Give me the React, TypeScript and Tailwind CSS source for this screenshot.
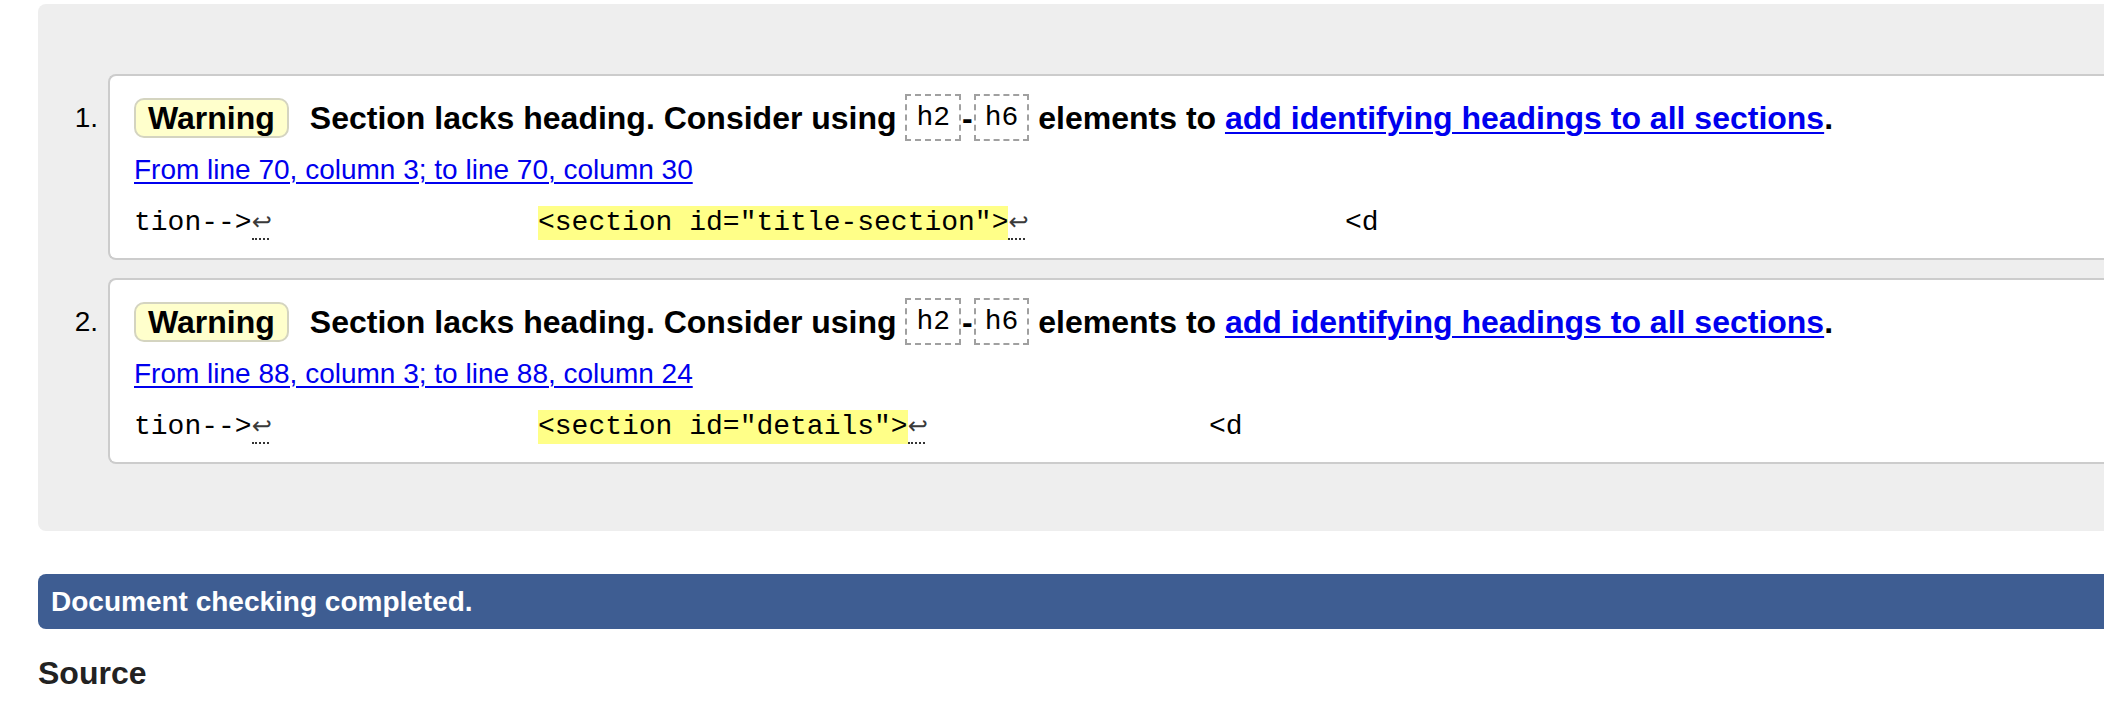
import React from "react";

type Item = {
  n: string;
  from: string;
  hl: string;
  tail: string;
};

const items: Item[] = [
  {
    n: "1.",
    from: "From line 70, column 3; to line 70, column 30",
    hl: '<section id="title-section">',
    tail: "w-[807px]",
  },
  {
    n: "2.",
    from: "From line 88, column 3; to line 88, column 24",
    hl: '<section id="details">',
    tail: "w-[671px]",
  },
];

function CodeBox({ children }: { children: React.ReactNode }) {
  return (
    <span className="inline-flex h-[47px] items-center border-2 border-dashed border-[#a0a0a0] px-[9px] font-['Liberation_Mono',monospace] text-[28px] font-normal">
      {children}
    </span>
  );
}

function Lf() {
  return (
    <span
      title="Line break"
      className="inline-block w-[17px] overflow-visible text-center leading-[32px] border-b-2 border-dotted border-[#333333] font-['DejaVu_Sans',sans-serif] text-[24px] text-[#3a3a3a]"
    >
      ↩
    </span>
  );
}

function Row({ item, first }: { item: Item; first: boolean }) {
  return (
    <li className={first ? "flex" : "mt-[18px] flex"}>
      <div className="mt-[18px] h-[51px] w-[70px] shrink-0 pr-[10px] text-right text-[28px] leading-[51px] text-black">
        {item.n}
      </div>
      <div className="min-w-0 flex-1 rounded-l-[8px] border-2 border-r-0 border-[#cccccc] bg-white pb-[18px] pl-[24px] pt-[16px]">
        <div className="flex h-[51px] items-center whitespace-nowrap text-[32px] font-bold text-black">
          <span className="mr-[21px] inline-flex h-[40px] items-center rounded-[10px] border-2 border-[#d4d4c0] bg-[#ffffcc] px-[12px]">
            Warning
          </span>
          <span className="whitespace-pre">Section lacks heading. Consider using </span>
          <CodeBox>h2</CodeBox>
          <span className="mx-[1px]">-</span>
          <CodeBox>h6</CodeBox>
          <span className="whitespace-pre"> elements to </span>
          <a href="#" className="text-[#0000ee] underline decoration-2 underline-offset-[3px]">
            add identifying headings to all sections
          </a>
          <span>.</span>
        </div>
        <div className="mt-[9px] h-[36px] text-[28px] leading-[36px]">
          <a href="#" className="text-[#0000ee] underline decoration-2 underline-offset-[3px]">
            {item.from}
          </a>
        </div>
        <div className="mt-[18px] flex h-[34px] items-center whitespace-pre font-['Liberation_Mono',monospace] text-[28px] text-black">
          <span className="flex w-[404px] shrink-0 items-center">
            <span>tion--&gt;</span>
            <Lf />
          </span>
          <span className={item.tail + " flex shrink-0 items-center"}>
            <span className="h-[34px] bg-[#ffff88] leading-[34px]">{item.hl}</span>
            <Lf />
          </span>
          <span>&lt;d</span>
        </div>
      </div>
    </li>
  );
}

export default function App() {
  return (
    <div className="min-h-screen w-full overflow-hidden bg-white pl-[38px] pt-[4px] font-['Liberation_Sans',Arial,sans-serif] text-black">
      <ol className="rounded-l-[8px] bg-[#eeeeee] pb-[67px] pt-[70px]">
        {items.map((it, i) => (
          <Row key={it.n} item={it} first={i === 0} />
        ))}
      </ol>
      <div className="mt-[43px] flex h-[55px] items-center rounded-l-[8px] bg-[#3e5d92] pl-[13px] text-[28px] font-bold text-white">
        Document checking completed.
      </div>
      <h2 className="mt-[24px] text-[32px] font-bold leading-[40px] text-[#222222]">Source</h2>
    </div>
  );
}
